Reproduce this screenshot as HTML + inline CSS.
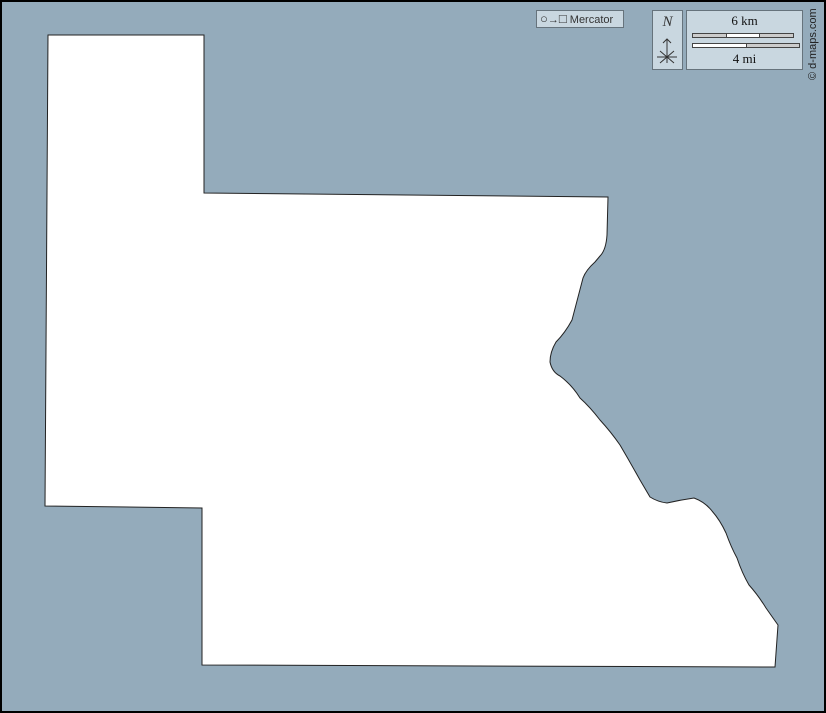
<!DOCTYPE html>
<html><head><meta charset="utf-8"><style>
html,body{margin:0;padding:0;}
body{width:826px;height:713px;position:relative;background:#94abbb;overflow:hidden;font-family:"Liberation Sans",sans-serif;}
.frame{position:absolute;left:0;top:0;width:822px;height:709px;border:2px solid #000;}
.box{position:absolute;background:#c9d7e0;border:1px solid #66737c;box-sizing:border-box;}
</style></head><body>
<svg width="826" height="713" style="position:absolute;left:0;top:0">
<path d="M48,35 L204,35 L204,193 L608,197 L607,235 Q606,250 600,256 L595,262 Q586,270 583,278 L572,320 Q565,333 556,342 Q550,352 550,362 Q552,372 560,376 Q572,385 580,398 Q590,407 600,420 Q611,432 620,445 Q630,462 640,480 L650,497 Q658,502 667,503 Q680,500 694,498 Q705,502 712,511 Q720,520 726,533 Q731,547 737,558 Q742,573 749,585 Q758,595 766,608 Q773,618 778,625 L775,667 L202,665 L202,508 L45,506 Z" fill="#fff" stroke="#222" stroke-width="1"/>
</svg>
<div class="frame"></div>
<div class="box" style="left:536px;top:10px;width:88px;height:18px;font-size:11px;color:#333;line-height:16px;padding-left:3px;"><span style="font-size:13px">○</span>→<span style="font-size:13px">□</span> Mercator</div>
<div class="box" style="left:652px;top:10px;width:31px;height:60px;">
<div style="position:absolute;left:0;width:29px;top:3px;text-align:center;font-family:'Liberation Serif',serif;font-style:italic;font-size:15px;color:#333">N</div>
<svg width="29" height="30" style="position:absolute;left:0;top:26px"><path d="M14,2 V26 M10,6 L14,2 L18,6 M4,20 H24 M7,14 L21,26 M21,14 L7,26" stroke="#333" fill="none" stroke-width="1"/></svg>
</div>
<div class="box" style="left:686px;top:10px;width:117px;height:60px;font-family:'Liberation Serif',serif;font-size:13px;color:#111;">
<div style="position:absolute;top:2px;width:115px;text-align:center">6 km</div>
<div style="position:absolute;left:5px;top:22px;width:100px;height:3px;border:1px solid #444;background:linear-gradient(90deg,#ccc 33%,#444 33%,#444 34%,#fff 34%,#fff 66%,#444 66%,#444 67%,#ccc 67%)"></div>
<div style="position:absolute;left:5px;top:32px;width:106px;height:3px;border:1px solid #444;background:linear-gradient(90deg,#fff 50%,#444 50%,#444 51%,#ccc 51%)"></div>
<div style="position:absolute;top:40px;width:115px;text-align:center">4 mi</div>
</div>
<div style="position:absolute;left:807px;top:80px;transform:rotate(-90deg);transform-origin:0 0;font-size:11px;color:#222;white-space:nowrap">© d-maps.com</div>
</body></html>
